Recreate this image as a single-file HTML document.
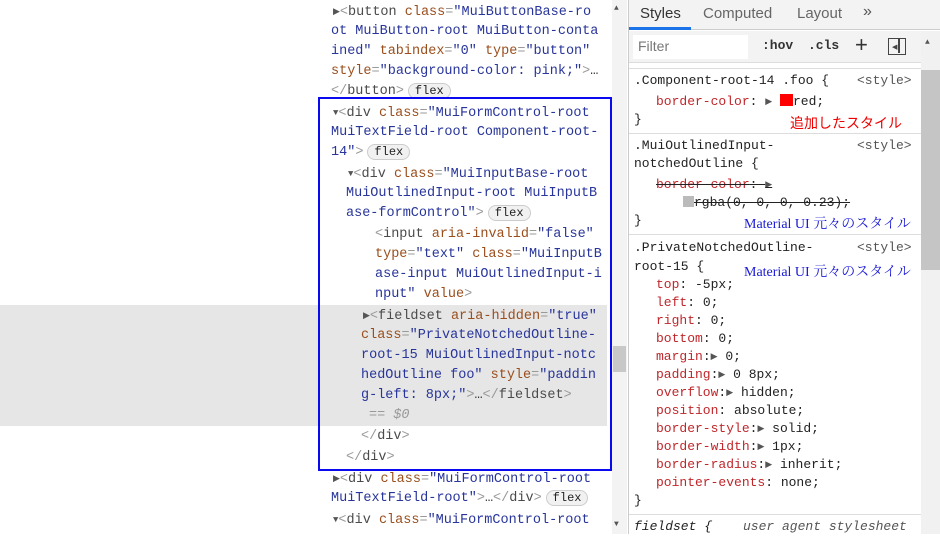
<!DOCTYPE html>
<html><head><meta charset="utf-8"><style>
*{margin:0;padding:0;box-sizing:border-box}
body{width:940px;height:534px;overflow:hidden;background:#fff;position:relative;font-family:"Liberation Mono",monospace}
.l{position:absolute;white-space:pre;font-size:13.5px;line-height:20px;color:#28359a}
.t{color:#999}.n{color:#4a4a4a}.a{color:#9a4e1c}.v{color:#28359a}.k{color:#333}
.tri{font-size:9px;color:#555;vertical-align:1px}
.flex{display:inline-block;font-size:12px;line-height:14px;padding:0 6px;border:1px solid #ccc;border-radius:8px;background:#f1f1f1;color:#222;margin-left:4px;font-family:"Liberation Mono",monospace}
.s{position:absolute;white-space:pre;font-size:13px;line-height:18px;color:#222}
.p{color:#c0262a}
.jp{position:absolute;font-family:"Liberation Serif","Noto Serif CJK SC",serif;font-size:14px;white-space:pre}
</style></head><body>
<div style="position:absolute;left:0;top:305px;width:607px;height:121px;background:#e6e6e6"></div>
<div style="position:absolute;left:612px;top:0;width:15px;height:534px;background:#f3f3f3"></div>
<div style="position:absolute;left:613px;top:346px;width:13px;height:26px;background:#c8c8c8"></div>
<div style="position:absolute;left:614px;top:4px;font-size:8px;color:#555">▲</div>
<div style="position:absolute;left:614px;top:520px;font-size:8px;color:#555">▼</div>

<div class="l" style="left:333px;top:2px"><span class="tri">▶</span><span class="t">&lt;</span><span class="n">button</span> <span class="a">class</span><span class="t">=</span>"MuiButtonBase-ro</div>
<div class="l" style="left:331px;top:22px">ot MuiButton-root MuiButton-conta</div>
<div class="l" style="left:331px;top:42px">ined" <span class="a">tabindex</span><span class="t">=</span>"0" <span class="a">type</span><span class="t">=</span>"button"</div>
<div class="l" style="left:331px;top:62px"><span class="a">style</span><span class="t">=</span>"background-color: pink;"<span class="t">&gt;</span><span class="k">…</span></div>
<div class="l" style="left:331px;top:82px"><span class="t">&lt;/</span><span class="n">button</span><span class="t">&gt;</span><span class="flex">flex</span></div>
<div class="l" style="left:333px;top:103px"><span class="tri">▼</span><span class="t">&lt;</span><span class="n">div</span> <span class="a">class</span><span class="t">=</span>"MuiFormControl-root</div>
<div class="l" style="left:331px;top:123px">MuiTextField-root Component-root-</div>
<div class="l" style="left:331px;top:143px">14"<span class="t">&gt;</span><span class="flex">flex</span></div>
<div class="l" style="left:348px;top:164px"><span class="tri">▼</span><span class="t">&lt;</span><span class="n">div</span> <span class="a">class</span><span class="t">=</span>"MuiInputBase-root</div>
<div class="l" style="left:346px;top:184px">MuiOutlinedInput-root MuiInputB</div>
<div class="l" style="left:346px;top:204px">ase-formControl"<span class="t">&gt;</span><span class="flex">flex</span></div>
<div class="l" style="left:375px;top:225px"><span class="t">&lt;</span><span class="n">input</span> <span class="a">aria-invalid</span><span class="t">=</span>"false"</div>
<div class="l" style="left:375px;top:245px"><span class="a">type</span><span class="t">=</span>"text" <span class="a">class</span><span class="t">=</span>"MuiInputB</div>
<div class="l" style="left:375px;top:265px">ase-input MuiOutlinedInput-i</div>
<div class="l" style="left:375px;top:285px">nput" <span class="a">value</span><span class="t">&gt;</span></div>
<div class="l" style="left:363px;top:306px"><span class="tri">▶</span><span class="t">&lt;</span><span class="n">fieldset</span> <span class="a">aria-hidden</span><span class="t">=</span>"true"</div>
<div class="l" style="left:361px;top:326px"><span class="a">class</span><span class="t">=</span>"PrivateNotchedOutline-</div>
<div class="l" style="left:361px;top:346px">root-15 MuiOutlinedInput-notc</div>
<div class="l" style="left:361px;top:366px">hedOutline foo" <span class="a">style</span><span class="t">=</span>"paddin</div>
<div class="l" style="left:361px;top:386px">g-left: 8px;"<span class="t">&gt;</span><span class="k">…</span><span class="t">&lt;/</span><span class="n">fieldset</span><span class="t">&gt;</span></div>
<div class="l" style="left:369px;top:406px;color:#999;font-style:italic">== $0</div>
<div class="l" style="left:361px;top:427px"><span class="t">&lt;/</span><span class="n">div</span><span class="t">&gt;</span></div>
<div class="l" style="left:346px;top:448px"><span class="t">&lt;/</span><span class="n">div</span><span class="t">&gt;</span></div>
<div class="l" style="left:333px;top:469px"><span class="tri">▶</span><span class="t">&lt;</span><span class="n">div</span> <span class="a">class</span><span class="t">=</span>"MuiFormControl-root</div>
<div class="l" style="left:331px;top:489px">MuiTextField-root"<span class="t">&gt;</span><span class="k">…</span><span class="t">&lt;/</span><span class="n">div</span><span class="t">&gt;</span><span class="flex">flex</span></div>
<div class="l" style="left:333px;top:510px"><span class="tri">▼</span><span class="t">&lt;</span><span class="n">div</span> <span class="a">class</span><span class="t">=</span>"MuiFormControl-root</div>

<div style="position:absolute;left:318px;top:97px;width:294px;height:374px;border:2px solid #0a0af0"></div>

<div style="position:absolute;left:628px;top:0;width:1px;height:534px;background:#ccc"></div>
<div style="position:absolute;left:629px;top:0;width:311px;height:30px;background:#f3f3f3;border-bottom:1px solid #ccc"></div>
<div style="position:absolute;left:629px;top:27px;width:62px;height:3px;background:#1a73e8"></div>
<div style="position:absolute;left:640px;top:5px;font:15px 'Liberation Sans',sans-serif;color:#333">Styles</div>
<div style="position:absolute;left:703px;top:5px;font:15px 'Liberation Sans',sans-serif;color:#666">Computed</div>
<div style="position:absolute;left:797px;top:5px;font:15px 'Liberation Sans',sans-serif;color:#666">Layout</div>
<div style="position:absolute;left:863px;top:3px;font:16px 'Liberation Sans',sans-serif;color:#555">»</div>
<div style="position:absolute;left:629px;top:31px;width:292px;height:32px;background:#f3f3f3;border-bottom:1px solid #ddd"></div>
<div style="position:absolute;left:633px;top:35px;width:115px;height:24px;background:#fff"></div>
<div style="position:absolute;left:638px;top:38px;font:14px 'Liberation Sans',sans-serif;color:#777">Filter</div>
<div style="position:absolute;left:762px;top:38px;font:bold 13px 'Liberation Mono',monospace;color:#333">:hov</div>
<div style="position:absolute;left:808px;top:38px;font:bold 13px 'Liberation Mono',monospace;color:#333">.cls</div>
<div style="position:absolute;left:855px;top:32px;font:22px 'Liberation Sans',sans-serif;color:#333">+</div>
<div style="position:absolute;left:888px;top:38px;width:18px;height:17px;border:1.5px solid #444"><div style="position:absolute;left:9px;top:0;width:1.5px;height:14px;background:#444"></div><div style="position:absolute;left:3px;top:4px;font-size:7px;color:#444">◀</div></div>
<div style="position:absolute;left:921px;top:31px;width:19px;height:503px;background:#f1f1f1"></div>
<div style="position:absolute;left:921px;top:70px;width:19px;height:200px;background:#c5c5c5"></div>
<div style="position:absolute;left:925px;top:38px;font-size:8px;color:#555">▲</div>

<div style="position:absolute;left:629px;top:68px;width:292px;height:1px;background:#ddd"></div>
<div class="s" style="left:634px;top:72px">.Component-root-14 .foo {</div>
<div class="s" style="left:857px;top:72px;color:#555">&lt;style&gt;</div>
<div class="s" style="left:656px;top:93px"><span class="p">border-color</span>: <span class="tri">▶</span> <span style="display:inline-block;width:13px;height:12px;background:#f00;vertical-align:-1px"></span>red;</div>
<div class="s" style="left:634px;top:111px">}</div>
<div class="jp" style="left:790px;top:113px;color:#e00;font-family:'Liberation Sans','Noto Sans CJK JP',sans-serif;font-size:14px">追加したスタイル</div>
<div style="position:absolute;left:629px;top:133px;width:292px;height:1px;background:#ddd"></div>
<div class="s" style="left:634px;top:137px">.MuiOutlinedInput-</div>
<div class="s" style="left:857px;top:137px;color:#555">&lt;style&gt;</div>
<div class="s" style="left:634px;top:155px">notchedOutline {</div>
<div class="s" style="left:656px;top:176px;text-decoration:line-through"><span class="p">border-color</span>: <span class="tri">▶</span></div>
<div class="s" style="left:683px;top:194px;text-decoration:line-through"><span style="display:inline-block;width:11px;height:11px;background:#bbb;vertical-align:-1px"></span>rgba(0, 0, 0, 0.23);</div>
<div class="s" style="left:634px;top:212px">}</div>
<div class="jp" style="left:744px;top:213px;color:#1a1ad6;font-family:'Liberation Serif','Noto Serif CJK JP',serif">Material UI 元々のスタイル</div>
<div style="position:absolute;left:629px;top:234px;width:292px;height:1px;background:#ddd"></div>
<div class="s" style="left:634px;top:239px">.PrivateNotchedOutline-</div>
<div class="s" style="left:857px;top:239px;color:#555">&lt;style&gt;</div>
<div class="s" style="left:634px;top:258px">root-15 {</div>
<div class="jp" style="left:744px;top:261px;color:#1a1ad6;font-family:'Liberation Serif','Noto Serif CJK JP',serif">Material UI 元々のスタイル</div>
<div class="s" style="left:656px;top:276px"><span class="p">top</span>: -5px;</div>
<div class="s" style="left:656px;top:294px"><span class="p">left</span>: 0;</div>
<div class="s" style="left:656px;top:312px"><span class="p">right</span>: 0;</div>
<div class="s" style="left:656px;top:330px"><span class="p">bottom</span>: 0;</div>
<div class="s" style="left:656px;top:348px"><span class="p">margin</span>:<span class="tri">▶</span> 0;</div>
<div class="s" style="left:656px;top:366px"><span class="p">padding</span>:<span class="tri">▶</span> 0 8px;</div>
<div class="s" style="left:656px;top:384px"><span class="p">overflow</span>:<span class="tri">▶</span> hidden;</div>
<div class="s" style="left:656px;top:402px"><span class="p">position</span>: absolute;</div>
<div class="s" style="left:656px;top:420px"><span class="p">border-style</span>:<span class="tri">▶</span> solid;</div>
<div class="s" style="left:656px;top:438px"><span class="p">border-width</span>:<span class="tri">▶</span> 1px;</div>
<div class="s" style="left:656px;top:456px"><span class="p">border-radius</span>:<span class="tri">▶</span> inherit;</div>
<div class="s" style="left:656px;top:474px"><span class="p">pointer-events</span>: none;</div>
<div class="s" style="left:634px;top:492px">}</div>
<div style="position:absolute;left:629px;top:514px;width:292px;height:1px;background:#ddd"></div>
<div class="s" style="left:634px;top:518px;font-style:italic">fieldset {</div>
<div class="s" style="left:743px;top:518px;font-style:italic;color:#555">user agent stylesheet</div>
</body></html>
